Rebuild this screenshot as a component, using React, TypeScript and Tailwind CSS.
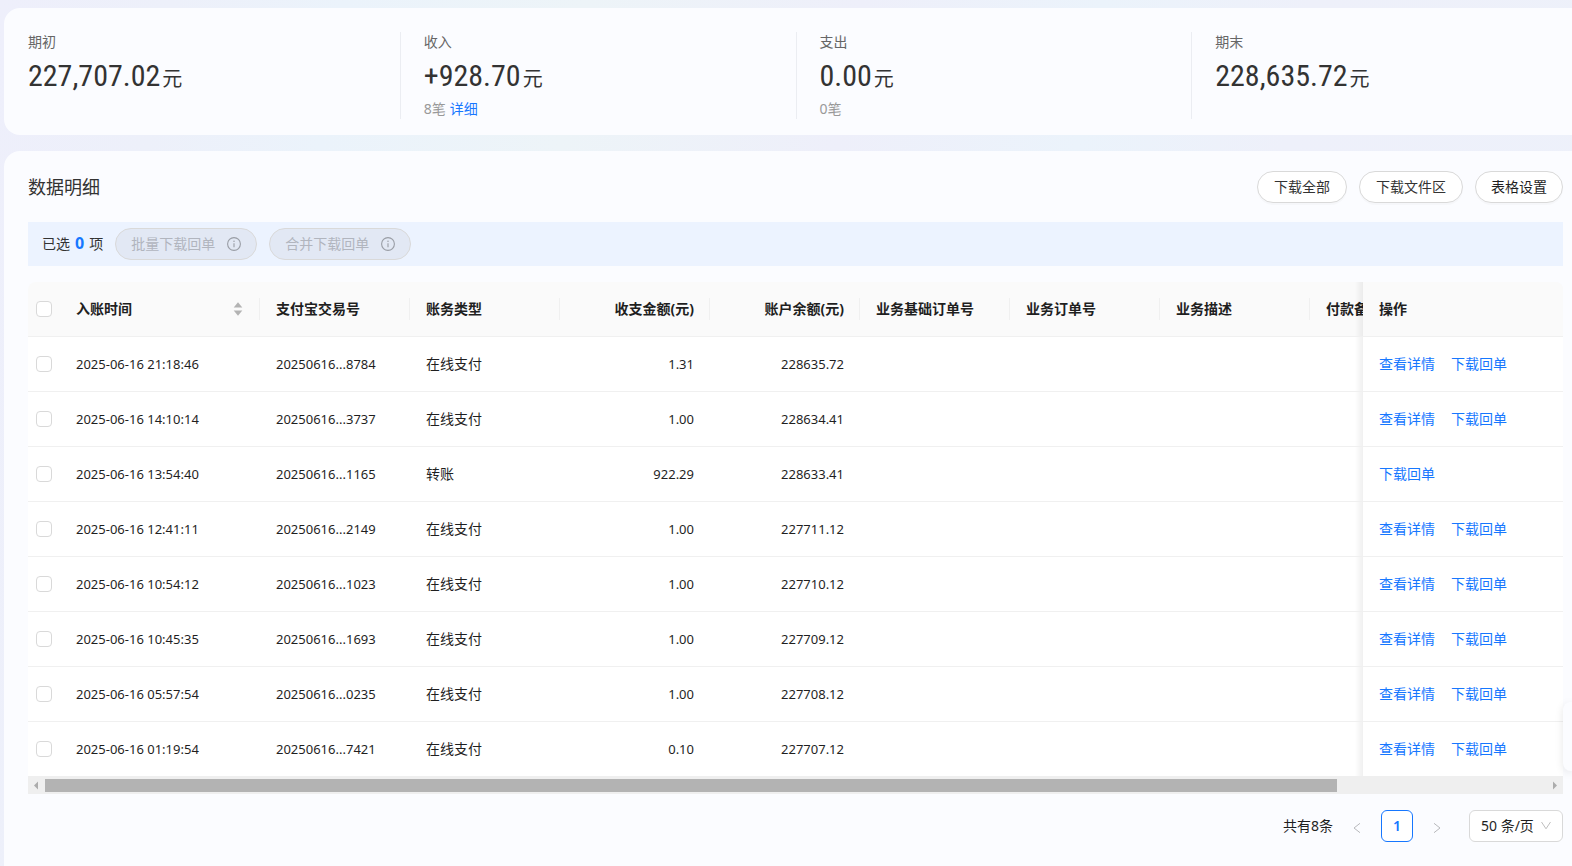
import React from 'react';

interface Summary {
  label: string;
  amount: string;
  count?: string;
  link?: string;
}

interface Row {
  time: string;
  tradeNo: string;
  type: string;
  amount: string;
  balance: string;
  actions: string[];
}

const SUMMARIES: Summary[] = [
  { label: '期初', amount: '227,707.02' },
  { label: '收入', amount: '+928.70', count: '8笔', link: '详细' },
  { label: '支出', amount: '0.00', count: '0笔' },
  { label: '期末', amount: '228,635.72' },
];

const BOTH = ['查看详情', '下载回单'];

const ROWS: Row[] = [
  { time: '2025-06-16 21:18:46', tradeNo: '20250616...8784', type: '在线支付', amount: '1.31', balance: '228635.72', actions: BOTH },
  { time: '2025-06-16 14:10:14', tradeNo: '20250616...3737', type: '在线支付', amount: '1.00', balance: '228634.41', actions: BOTH },
  { time: '2025-06-16 13:54:40', tradeNo: '20250616...1165', type: '转账', amount: '922.29', balance: '228633.41', actions: ['下载回单'] },
  { time: '2025-06-16 12:41:11', tradeNo: '20250616...2149', type: '在线支付', amount: '1.00', balance: '227711.12', actions: BOTH },
  { time: '2025-06-16 10:54:12', tradeNo: '20250616...1023', type: '在线支付', amount: '1.00', balance: '227710.12', actions: BOTH },
  { time: '2025-06-16 10:45:35', tradeNo: '20250616...1693', type: '在线支付', amount: '1.00', balance: '227709.12', actions: BOTH },
  { time: '2025-06-16 05:57:54', tradeNo: '20250616...0235', type: '在线支付', amount: '1.00', balance: '227708.12', actions: BOTH },
  { time: '2025-06-16 01:19:54', tradeNo: '20250616...7421', type: '在线支付', amount: '0.10', balance: '227707.12', actions: BOTH },
];

const COLUMNS = [
  { title: '支付宝交易号', right: false },
  { title: '账务类型', right: false },
  { title: '收支金额(元)', right: true },
  { title: '账户余额(元)', right: true },
  { title: '业务基础订单号', right: false },
  { title: '业务订单号', right: false },
  { title: '业务描述', right: false },
  { title: '付款备注', right: false },
  { title: '备注', right: false },
];

const InfoIcon = () => (
  <svg className="h-3.5 w-3.5" viewBox="0 0 14 14" fill="none" aria-hidden="true">
    <circle cx="7" cy="7" r="6.4" stroke="currentColor" strokeWidth="1.1" />
    <path d="M7 6.2v4" stroke="currentColor" strokeWidth="1.1" />
    <circle cx="7" cy="4.2" r="0.75" fill="currentColor" />
  </svg>
);

const Checkbox: React.FC<{ label: string }> = ({ label }) => (
  <input
    type="checkbox"
    aria-label={label}
    className="block h-4 w-4 appearance-none rounded border border-[#d9d9d9] bg-white checked:border-[#1677ff] checked:bg-[#1677ff]"
  />
);

const SummaryCard = () => (
  <section className="-mr-[15px] flex rounded-2xl bg-[#fbfcff] pt-6 pb-4">
    {SUMMARIES.map((item) => (
      <div
        key={item.label}
        className="flex min-h-[87px] w-1/4 flex-col border-l border-[#ebedf2] pl-[23px] text-sm first:border-transparent"
      >
        <span className="leading-5 text-[#666]">{item.label}</span>
        <div className="flex h-[46px] items-baseline gap-0.5 text-[#333]">
          <span className="font-['Roboto_Condensed','Roboto',sans-serif] text-[30px] leading-[48px]">{item.amount}</span>
          <span className="text-xl">元</span>
        </div>
        {item.count && (
          <div className="leading-[21px] text-[#999]">
            {item.count}
            {item.link && <a href="#detail" className="ml-1 text-[#1677ff]">{item.link}</a>}
          </div>
        )}
      </div>
    ))}
  </section>
);

const BatchBar = () => (
  <div className="mt-[19px] flex h-11 items-center gap-3 bg-[#ecf3ff] pl-3.5">
    <span className="text-[#333]">
      已选<b className="px-[5px] text-base leading-none text-[#1677ff]">0</b>项
    </span>
    {['批量下载回单', '合并下载回单'].map((text) => (
      <button
        key={text}
        type="button"
        disabled
        className="flex h-8 items-center gap-3 rounded-full border border-[#d9d9d9] bg-[#e2e8f4] px-[15px] text-[#b1b5be]"
      >
        {text}
        <span className="text-[#999da5]"><InfoIcon /></span>
      </button>
    ))}
  </div>
);

const FIXED_CELL =
  "sticky right-0 px-4 before:pointer-events-none before:absolute before:inset-y-0 before:-left-2 before:w-2 before:bg-linear-to-l before:from-black/6 before:to-transparent before:content-['']";

const DataTable = () => (
  <div className="mt-4">
    <div className="overflow-x-hidden rounded-t-lg">
      <table className="w-full min-w-[1782px] table-fixed border-separate border-spacing-0 text-left text-[#1f1f1f]">
        <colgroup>
          <col className="w-8" />
          <col className="w-[200px]" />
          {COLUMNS.map((col) => <col key={col.title} className="w-[150px]" />)}
          <col className="w-[200px]" />
        </colgroup>
        <thead>
          <tr className="[&>th]:border-b [&>th]:border-[#f0f0f0] [&>th]:bg-[#fafafa] [&>th]:py-4 [&>th]:leading-[22px] [&>th]:font-bold">
            <th className="px-2"><Checkbox label="全选" /></th>
            <th>
              <div className="flex items-center justify-between border-r border-[#f0f0f0] pr-[15px] pl-4">
                入账时间
                <svg className="h-4 w-3 text-[#b3b3b3]" viewBox="0 0 12 16" fill="currentColor" aria-hidden="true">
                  <path d="M6 1.2 10.3 6.6H1.7z" />
                  <path d="M6 14.8 1.7 9.4h8.6z" />
                </svg>
              </div>
            </th>
            {COLUMNS.map((col) => (
              <th key={col.title} className={col.right ? 'text-right' : ''}>
                <div className="border-r border-[#f0f0f0] pr-[15px] pl-4">{col.title}</div>
              </th>
            ))}
            <th className={FIXED_CELL}>操作</th>
          </tr>
        </thead>
        <tbody>
          {ROWS.map((row) => (
            <tr
              key={row.time}
              className="[&>td]:border-b [&>td]:border-[#f0f0f0] [&>td]:bg-white [&>td]:py-4 [&>td]:leading-[22px] last:[&>td]:border-b-0"
            >
              <td className="px-2"><Checkbox label={row.time} /></td>
              <td className="px-4 text-[13px]">{row.time}</td>
              <td className="px-4 text-[13px]">{row.tradeNo}</td>
              <td className="px-4">{row.type}</td>
              <td className="px-4 text-right text-[13px]">{row.amount}</td>
              <td className="px-4 text-right text-[13px]">{row.balance}</td>
              <td />
              <td />
              <td />
              <td />
              <td />
              <td className={FIXED_CELL}>
                <div className="flex gap-4">
                  {row.actions.map((action) => (
                    <a key={action} href="#receipt" className="text-[#1677ff]">{action}</a>
                  ))}
                </div>
              </td>
            </tr>
          ))}
        </tbody>
      </table>
    </div>
    <div className="flex h-[18px] items-center bg-[#efefef] text-[#acacac]">
      <svg className="h-[18px] w-[17px]" viewBox="0 0 17 18" fill="currentColor" aria-hidden="true">
        <path d="M10 5.5v8L6 9.5z" />
      </svg>
      <div className="flex-1">
        <div className="h-[13px] w-[86.1%] bg-[#b3b3b3]" />
      </div>
      <svg className="h-[18px] w-[17px]" viewBox="0 0 17 18" fill="currentColor" aria-hidden="true">
        <path d="M7 5.5v8l4-4z" />
      </svg>
    </div>
  </div>
);

const Pagination = () => (
  <div className="mt-4 flex items-center justify-end gap-2 text-[#1f1f1f]">
    <span>共有8条</span>
    <button type="button" aria-label="上一页" disabled className="flex h-8 w-8 items-center justify-center pt-1 text-[#b8b9bc]">
      <svg className="h-3 w-3" viewBox="0 0 12 12" fill="none" stroke="currentColor" aria-hidden="true">
        <path d="M9 1.3 3 6l6 4.7" />
      </svg>
    </button>
    <button type="button" className="h-8 w-8 rounded-md border border-[#1677ff] bg-white font-semibold text-[#1677ff]">1</button>
    <button type="button" aria-label="下一页" disabled className="flex h-8 w-8 items-center justify-center pt-1 text-[#b8b9bc]">
      <svg className="h-3 w-3" viewBox="0 0 12 12" fill="none" stroke="currentColor" aria-hidden="true">
        <path d="m3 1.3 6 4.7-6 4.7" />
      </svg>
    </button>
    <div className="relative ml-2">
      <select aria-label="每页条数" className="h-8 w-[94px] appearance-none rounded-md border border-[#d9d9d9] bg-white pl-[11px]">
        <option>50 条/页</option>
      </select>
      <svg
        className="pointer-events-none absolute top-2.5 right-[11px] h-3 w-3 text-[#bfbfbf]"
        viewBox="0 0 12 12"
        fill="none"
        stroke="currentColor"
        aria-hidden="true"
      >
        <path d="M1.5 2 6 8.8 10.5 2" />
      </svg>
    </div>
  </div>
);

const App: React.FC = () => {
  return (
    <main className="min-h-screen overflow-hidden bg-[linear-gradient(100deg,#eeeffb_0%,#edf0fa_10%,#ebf3fb_20%,#edf4f8_34%,#eeeffa_50%,#ebf3fb_64%,#eef0fa_76%,#edf1fa_100%)] pt-2 pl-1 font-['Noto_Sans','Noto_Sans_CJK_SC',sans-serif] text-sm">
      <SummaryCard />
      <section className="mt-4 -mr-[15px] min-h-[calc(100vh-151px)] rounded-tl-2xl bg-[#fbfcff] px-6 pt-5 pb-6">
        <div className="flex items-center justify-between">
          <h2 className="text-lg leading-8 text-[#333]">数据明细</h2>
          <div className="flex gap-3 text-[#333]">
            <button type="button" className="h-8 rounded-full border border-[#d9d9d9] bg-white px-4 shadow-[0_2px_0_rgba(0,0,0,0.02)]">下载全部</button>
            <button type="button" className="h-8 rounded-full border border-[#d9d9d9] bg-white px-4 shadow-[0_2px_0_rgba(0,0,0,0.02)]">下载文件区</button>
            <button type="button" className="h-8 rounded-full border border-[#d9d9d9] bg-white px-[15px] text-[#1f1f1f] shadow-[0_2px_0_rgba(0,0,0,0.02)]">表格设置</button>
          </div>
        </div>
        <BatchBar />
        <DataTable />
        <Pagination />
      </section>
      <div className="fixed right-0 bottom-[95px] h-[69px] w-[9px] rounded-l-lg bg-[#fbfcff] shadow-[0_2px_8px_rgba(0,0,0,0.1)]" />
    </main>
  );
};

export default App;
